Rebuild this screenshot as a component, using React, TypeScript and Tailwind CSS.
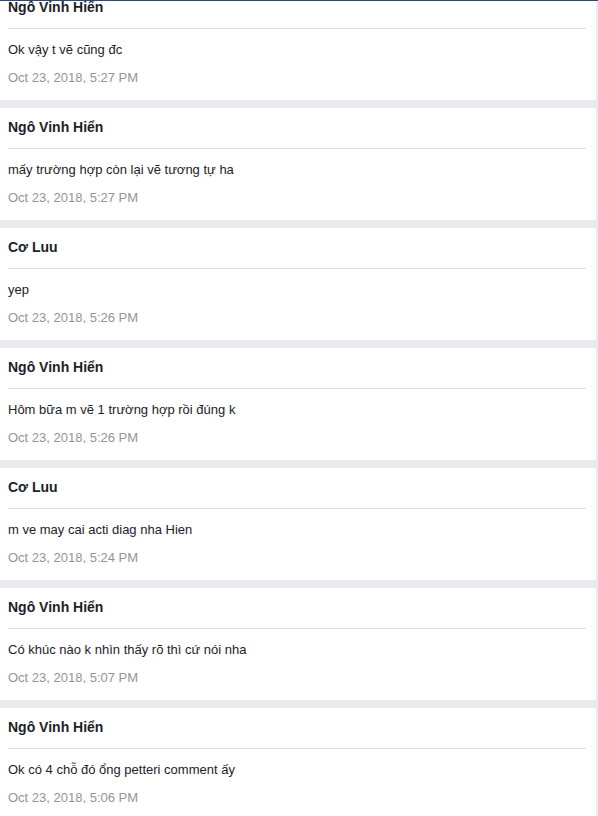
const messages = [
  { name: 'Ngô Vinh Hiển', text: 'Ok vậy t vẽ cũng đc', time: 'Oct 23, 2018, 5:27 PM' },
  { name: 'Ngô Vinh Hiển', text: 'mấy trường hợp còn lại vẽ tương tự ha', time: 'Oct 23, 2018, 5:27 PM' },
  { name: 'Cơ Luu', text: 'yep', time: 'Oct 23, 2018, 5:26 PM' },
  { name: 'Ngô Vinh Hiển', text: 'Hôm bữa m vẽ 1 trường hợp rồi đúng k', time: 'Oct 23, 2018, 5:26 PM' },
  { name: 'Cơ Luu', text: 'm ve may cai acti diag nha Hien', time: 'Oct 23, 2018, 5:24 PM' },
  { name: 'Ngô Vinh Hiển', text: 'Có khúc nào k nhìn thấy rõ thì cứ nói nha', time: 'Oct 23, 2018, 5:07 PM' },
  { name: 'Ngô Vinh Hiển', text: 'Ok có 4 chỗ đó ổng petteri comment ấy', time: 'Oct 23, 2018, 5:06 PM' },
]

function MessageCard({ name, text, time }: { name: string; text: string; time: string }) {
  return (
    <div className="bg-white rounded-r-[3px] pl-2 pr-[10px] pt-[10px] pb-[13px]">
      <div className="text-[14px] leading-[18px] font-bold text-[#1d2129]">{name}</div>
      <div className="h-px bg-[#dadde1] mt-3" />
      <div className="text-[13px] leading-[18px] text-[#1d2129] mt-3">{text}</div>
      <div className="text-[13px] leading-[18px] text-[#90949c] mt-[10px]">{time}</div>
    </div>
  )
}

export default function App() {
  return (
    <div
      className="relative w-[598px] h-[816px] overflow-hidden bg-[#e9ebee]"
      style={{ fontFamily: '"Liberation Sans", Arial, sans-serif' }}
    >
      <div className="absolute top-0 left-0 right-0 h-px bg-[#29487d] z-10" />
      <div className="flex flex-col gap-2 mt-[-12px] w-[596px]">
        {messages.map((m, i) => (
          <MessageCard key={i} {...m} />
        ))}
      </div>
    </div>
  )
}
